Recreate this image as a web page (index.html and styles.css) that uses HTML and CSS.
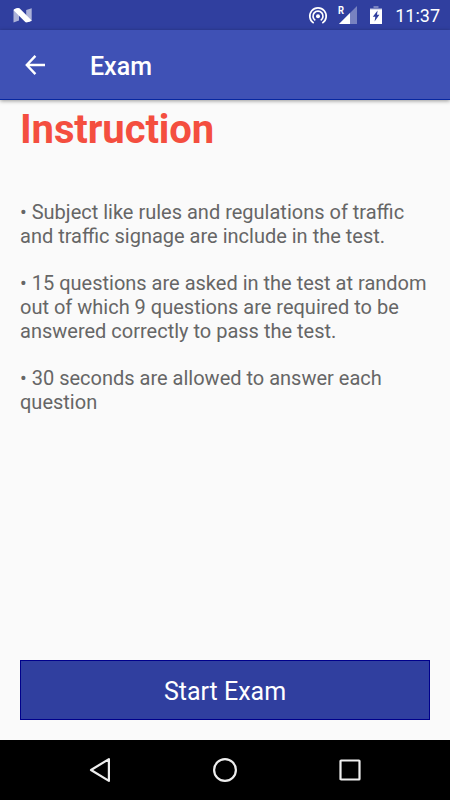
FILE: index.html
```html
<!DOCTYPE html>
<html lang="en">
<head>
    <meta charset="UTF-8">
    <meta name="viewport" content="width=device-width, initial-scale=1.0">
    <title>Exam</title>
    <link rel="stylesheet" href="styles.css">
</head>
<body>
    <div class="screen">
        <div class="status-bar">
            <svg class="icon-n" width="20" height="16" viewBox="0 0 20 16">
                <path d="M.5 1.5L6 .5V12.5L.5 14.5ZM13.2 2L18.7.3V13L13.2 14.5Z" fill="#fff" fill-opacity=".6"/>
                <path d="M1.2 1.2Q4-.4 6.5.3L18.7 12.6Q16 14.8 12.5 14.2L.8 2.6Z" fill="#fff"/>
            </svg>
            <div class="status-icons">
                <svg class="icon-cast" width="20" height="20" viewBox="0 0 20 20" fill="none" stroke="#fff" stroke-width="1.7">
                    <path d="M5.7 17.1A8.2 8.2 0 1 1 14.3 17.1"/>
                    <path d="M7.3 14.4A5 5 0 1 1 12.7 14.4"/>
                    <circle cx="10" cy="10.3" r="2" fill="#fff" stroke="none"/>
                </svg>
                <svg class="icon-signal" width="20" height="20" viewBox="0 0 20 20">
                    <path d="M19 1V19H1Z" fill="#fff" fill-opacity=".35"/>
                    <path d="M12 8V19H1Z" fill="#fff"/>
                    <text class="roaming" x="0" y="9" textLength="6" lengthAdjust="spacingAndGlyphs">R</text>
                </svg>
                <svg class="icon-battery" width="12" height="18" viewBox="0 0 12 18">
                    <path d="M3.5 0H8.5V2H12V4H0V2H3.5Z" fill="#fff" fill-opacity=".35"/>
                    <path d="M0 3.3H12V18H0Z" fill="#fff"/>
                    <path d="M7.6 4.4L2.8 10.8H5.3L4.6 15.5L9.4 8.8H7Z" fill="#303f9f"/>
                </svg>
                <span class="clock">11:37</span>
            </div>
        </div>

        <div class="toolbar">
            <svg class="icon-back" width="20" height="20" viewBox="0 0 20 20" fill="none" stroke="#fff" stroke-width="2.4">
                <path d="M20 10H2M10.4.9L1.8 10L10.4 19.1"/>
            </svg>
            <span class="title">Exam</span>
        </div>

        <div class="content">
            <h1>Instruction</h1>
            <div class="rules">
                <p>• Subject like rules and regulations of traffic<br>and traffic signage are include in the test.</p>
                <p>• 15 questions are asked in the test at random<br>out of which 9 questions are required to be<br>answered correctly to pass the test.</p>
                <p>• 30 seconds are allowed to answer each<br>question</p>
            </div>
            <button class="start">Start Exam</button>
        </div>

        <div class="nav-bar">
            <svg width="24" height="26" viewBox="0 0 24 26">
                <path d="M20.9 2.1V23.9L3 13Z"/>
            </svg>
            <svg width="26" height="26" viewBox="0 0 26 26">
                <circle cx="13" cy="13" r="10.9"/>
            </svg>
            <svg width="24" height="26" viewBox="0 0 24 26">
                <rect x="2.5" y="3.5" width="19" height="19" rx=".6"/>
            </svg>
        </div>
    </div>
</body>
</html>
```

FILE: styles.css
```css
* {
    box-sizing: border-box;
}
body {
    margin: 0;
    font-family: Roboto, sans-serif;
    background: #fafafa;
}
.screen {
    display: flex;
    flex-direction: column;
    width: 450px;
    height: 800px;
    overflow: hidden;
}
.status-bar {
    display: flex;
    justify-content: space-between;
    height: 30px;
    padding: 0 10px 0 13px;
    background: #303f9f;
    color: #fff;
}
.icon-n {
    margin-top: 8px;
}
.status-icons {
    display: flex;
    align-items: flex-start;
}
.icon-cast {
    margin: 6px 10px 0 0;
}
.icon-signal {
    margin: 5px 12px 0 0;
    overflow: visible;
}
.icon-battery {
    margin: 6px 13px 0 0;
}
.roaming {
    font-size: 11px;
    font-weight: bold;
    fill: #fff;
}
.clock {
    font-size: 18px;
    line-height: 32px;
}
.toolbar {
    display: flex;
    align-items: center;
    gap: 45px;
    height: 70px;
    padding: 0 25px;
    background: #3f51b5;
    border-bottom: 1px solid #0727a0;
    box-shadow: 0 1px 4px rgba(0,0,0,0.4);
    color: #fff;
    z-index: 1;
}
.title {
    padding-top: 3px;
    font-size: 25px;
    font-weight: 500;
}
.content {
    display: flex;
    flex-direction: column;
    flex: 1;
    padding: 6px 20px 20px;
}
h1 {
    margin: 0;
    font-size: 40px;
    font-weight: bold;
    line-height: 47px;
    letter-spacing: -0.1px;
    color: #f44e3f;
}
.rules {
    margin-top: 48px;
    font-size: 20px;
    line-height: 23.75px;
    color: #666;
    white-space: nowrap;
}
.rules p {
    margin: 0 0 23.75px;
}
.start {
    height: 60px;
    margin-top: auto;
    padding: 2px 0 0;
    border: 1px solid #00008b;
    background: #303f9f;
    color: #fff;
    font-family: inherit;
    font-size: 25px;
}
.nav-bar {
    display: flex;
    align-items: center;
    justify-content: space-between;
    height: 60px;
    padding: 0 88px;
    background: #000;
}
.nav-bar svg {
    fill: none;
    stroke: #eee;
    stroke-width: 2.2;
    stroke-linejoin: round;
}
```
